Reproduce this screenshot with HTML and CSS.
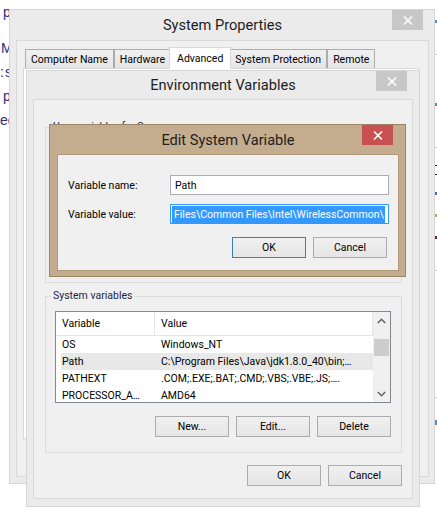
FILE: index.html
```html
<!DOCTYPE html>
<html>
<head>
<meta charset="utf-8">
<title>Edit System Variable</title>
<link rel="stylesheet" href="styles.css">
</head>
<body>
<div class="desktop">
  <div class="bgtext">
    <div class="bgline first in3">p</div>
    <div class="bgline in1">M</div>
    <div class="bgline">:&#8202;s</div>
    <div class="bgline in3">p</div>
    <div class="bgline">ec</div>
  </div>
  <div class="bgright"></div>

  <section class="win sysprops">
    <header class="titlebar tb-sys">
      <span class="title">System Properties</span>
      <span class="close"><svg width="10" height="9" viewBox="0 0 10 9"><path d="M1 0.5 L9 8.5 M9 0.5 L1 8.5" stroke="#fff" stroke-width="1.6" fill="none"/></svg></span>
    </header>
    <div class="client sys-client">
      <div class="tabs">
        <span class="tab">Computer Name</span>
        <span class="tab">Hardware</span>
        <span class="tab active">Advanced</span>
        <span class="tab">System Protection</span>
        <span class="tab">Remote</span>
      </div>
      <div class="tabpanel"></div>
    </div>
  </section>

  <section class="win envvars">
    <header class="titlebar tb-env">
      <span class="title">Environment Variables</span>
      <span class="close"><svg width="10" height="9" viewBox="0 0 10 9"><path d="M1 0.5 L9 8.5 M9 0.5 L1 8.5" stroke="#fff" stroke-width="1.6" fill="none"/></svg></span>
    </header>
    <div class="client env-client">
      <fieldset class="group user-group">
        <legend>User variables for Samsung</legend>
      </fieldset>
      <fieldset class="group sys-group">
        <legend>System variables</legend>
        <div class="listview">
          <div class="lv-main">
            <div class="lv-head">
              <span class="h1">Variable</span>
              <span class="h2">Value</span>
            </div>
            <div class="lv-row"><span class="c1">OS</span><span class="c2">Windows_NT</span></div>
            <div class="lv-row selected"><span class="c1">Path</span><span class="c2">C:\Program Files\Java\jdk1.8.0_40\bin;…</span></div>
            <div class="lv-row"><span class="c1">PATHEXT</span><span class="c2">.COM;.EXE;.BAT;.CMD;.VBS;.VBE;.JS;….</span></div>
            <div class="lv-row"><span class="c1">PROCESSOR_A…</span><span class="c2">AMD64</span></div>
          </div>
          <div class="scrollbar">
            <span class="sb-btn"><svg width="9" height="6" viewBox="0 0 9 6"><path d="M0.8 5 L4.5 1.3 L8.2 5" stroke="#606060" stroke-width="1.5" fill="none"/></svg></span>
            <span class="sb-thumb"></span>
            <span class="sb-btn sb-down"><svg width="9" height="6" viewBox="0 0 9 6"><path d="M0.8 1 L4.5 4.7 L8.2 1" stroke="#606060" stroke-width="1.5" fill="none"/></svg></span>
          </div>
        </div>
        <div class="btn-row group-btns">
          <button class="btn">New...</button>
          <button class="btn">Edit...</button>
          <button class="btn">Delete</button>
        </div>
      </fieldset>
      <div class="btn-row dialog-btns">
        <button class="btn">OK</button>
        <button class="btn">Cancel</button>
      </div>
    </div>
  </section>

  <section class="win editvar">
    <header class="titlebar tb-edit">
      <span class="title">Edit System Variable</span>
      <span class="close red"><svg width="10" height="9" viewBox="0 0 10 9"><path d="M1 0.5 L9 8.5 M9 0.5 L1 8.5" stroke="#fff" stroke-width="1.6" fill="none"/></svg></span>
    </header>
    <div class="client edit-client">
      <div class="form">
        <label class="flabel">Variable name:</label>
        <div class="field">Path</div>
        <label class="flabel">Variable value:</label>
        <div class="field focused"><span class="sel">Files\Common Files\Intel\WirelessCommon\</span></div>
      </div>
      <div class="btn-row edit-btns">
        <button class="btn default">OK</button>
        <button class="btn">Cancel</button>
      </div>
    </div>
  </section>
</div>
</body>
</html>
```

FILE: styles.css
```css
* { box-sizing: border-box; }

html, body {
  margin: 0;
  padding: 0;
}

body {
  width: 437px;
  height: 513px;
  overflow: hidden;
  background: #ffffff;
  font-family: Roboto, "Liberation Sans", sans-serif;
  font-size: 10.5px;
  color: #000;
}

.desktop {
  position: relative;
  width: 437px;
  height: 513px;
  overflow: hidden;
  background: #fff;
}

/* background window remnants */
.bgtext {
  position: absolute;
  left: 0;
  top: 0;
  display: flex;
  flex-direction: column;
  font-family: "Liberation Sans", sans-serif;
  font-size: 14px;
  line-height: 24px;
  color: #2b2e7d;
}
.bgline { height: 24px; white-space: nowrap; }
.bgline.first { margin-bottom: 12px; }
.in3 { padding-left: 3px; }
.in1 { padding-left: 1px; }

.bgright {
  position: absolute;
  left: 434px;
  top: 0;
  width: 3px;
  height: 513px;
  background: linear-gradient(to bottom,
    transparent 0 20px, #4a93d8 20px 23px,
    transparent 23px 54px, #cfcfcf 54px 55px,
    transparent 55px 103px, #4a93d8 103px 106px,
    transparent 106px 147px, #cfcfcf 147px 148px,
    transparent 148px 165px, #222 165px 166px,
    transparent 166px 174px, #222 174px 175px,
    transparent 175px 192px, #3b6fd0 192px 195px,
    transparent 195px 214px, #d8a040 214px 217px,
    transparent 217px 236px, #7a2040 236px 239px,
    transparent 239px 270px, #cfcfcf 270px 271px,
    transparent 271px 397px, #cfcfcf 397px 398px,
    transparent 398px 420px, #4a93d8 420px 425px,
    transparent 425px);
}

/* windows */
.win {
  position: absolute;
  display: flex;
  flex-direction: column;
  border: 1px solid #d6d6d6;
  background: #ebebeb;
}

.titlebar {
  position: relative;
  flex: none;
  display: flex;
  align-items: center;
  justify-content: center;
}
.title {
  font-size: 14.6px;
  color: #1e1e1e;
  white-space: nowrap;
}
.close {
  position: absolute;
  top: 0;
  right: 6px;
  width: 31px;
  height: 20px;
  background: #c7c7c7;
  display: flex;
  align-items: center;
  justify-content: center;
}
.close.red { background: #c75050; }

.client {
  flex: 1;
  display: flex;
  flex-direction: column;
  border: 1px solid #d9d9d9;
  background: #f0f0f0;
}

/* System Properties */
.sysprops {
  left: 9px;
  top: 9px;
  width: 426px;
  height: 475px;
  padding: 0 5px 6px 6px;
}
.tb-sys { height: 30px; }
.sys-client { padding: 6px 9px 37px 6px; }

.tabs {
  height: 21px;
  display: flex;
  align-items: flex-end;
  padding-left: 2px;
  position: relative;
  z-index: 1;
}
.tab {
  height: 19px;
  padding: 0 5px;
  display: flex;
  align-items: center;
  border: 1px solid #acacac;
  border-bottom: none;
  background: linear-gradient(#f0f0f0, #e5e5e5);
  white-space: nowrap;
}
.tab.active {
  height: 22px;
  margin: 0 -2px -1px -2px;
  padding: 0 7px 1px;
  background: #fff;
  border-color: #d9d9d9;
  position: relative;
  z-index: 2;
}
.tabpanel {
  flex: 1;
  border: 1px solid #d9d9d9;
  background: #fff;
}

/* Environment Variables */
.envvars {
  left: 26px;
  top: 70px;
  width: 394px;
  height: 437px;
  padding: 0 6px 7px 6px;
}
.tb-env { height: 28px; }
.env-client { padding: 20px 10px 12px 11px; }

.group {
  margin: 0;
  padding: 0;
  min-width: 0;
  border: 1px solid #dcdcdc;
}
.group legend {
  padding: 0 2px;
  margin-left: 5px;
  line-height: 14px;
  color: #1f2545;
  white-space: nowrap;
}
.user-group { height: 163px; }
.sys-group {
  margin-top: 6px;
  padding-bottom: 15px;
}

.listview {
  margin: 8px 10px 0 9px;
  height: 92px;
  border: 1px solid #828790;
  background: #fff;
  display: flex;
}
.lv-main {
  flex: 1;
  overflow: hidden;
  display: flex;
  flex-direction: column;
}
.lv-head {
  flex: none;
  height: 24px;
  display: flex;
  border-bottom: 1px solid #e5e5e5;
  border-right: 1px solid #e5e5e5;
}
.lv-head span {
  display: flex;
  align-items: center;
}
.h1 {
  width: 99px;
  padding-left: 6px;
  border-right: 1px solid #e5e5e5;
}
.h2 { padding-left: 6px; }
.lv-row {
  flex: none;
  height: 17px;
  margin-left: 5px;
  display: flex;
  align-items: center;
  white-space: nowrap;
}
.lv-row.selected { background: #e8e8e8; }
.c1 { width: 94px; padding-left: 1px; flex: none; }
.c2 { padding-left: 6px; }

.scrollbar {
  width: 17px;
  flex: none;
  background: #f0f0f0;
  display: flex;
  flex-direction: column;
  align-items: center;
}
.sb-btn {
  height: 17px;
  width: 17px;
  display: flex;
  align-items: center;
  justify-content: center;
}
.sb-down { margin-top: auto; }
.sb-thumb {
  margin-top: 10px;
  width: 15px;
  height: 17px;
  background: #cdcdcd;
}

.btn-row {
  display: flex;
  justify-content: flex-end;
  gap: 7px;
}
.group-btns {
  margin: 13px 10px 0 0;
}
.dialog-btns { margin-top: 12px; }

.btn {
  width: 74px;
  height: 21px;
  padding: 0;
  margin: 0;
  border: 1px solid #acacac;
  background: linear-gradient(#f0f0f0, #e5e5e5);
  font-family: Roboto, "Liberation Sans", sans-serif;
  font-size: 10.5px;
  color: #000;
}
.btn.default { border-color: #3c7fb1; }

/* Edit System Variable */
.editvar {
  left: 49px;
  top: 124px;
  width: 357px;
  height: 153px;
  padding: 0 6px 5px 7px;
  background: #c4ad8e;
  border-color: #9c8466;
}
.tb-edit { height: 29px; }
.edit-client {
  padding: 20px 9px 12px 10px;
  border-color: #b29a78;
}

.form {
  display: grid;
  grid-template-columns: 102px 219px;
  row-gap: 9px;
  align-items: center;
}
.flabel { white-space: nowrap; }
.field {
  height: 20px;
  border: 1px solid #abadb3;
  background: #fff;
  padding-left: 4px;
  display: flex;
  align-items: center;
  white-space: nowrap;
  overflow: hidden;
}
.field.focused {
  border-color: #3399ff;
  padding-left: 1px;
}
.sel {
  background: #3399ff;
  color: #fff;
  padding: 0 1px 0 2px;
  line-height: 17px;
}
.edit-btns {
  margin-top: 13px;
  padding-right: 2px;
}
```
